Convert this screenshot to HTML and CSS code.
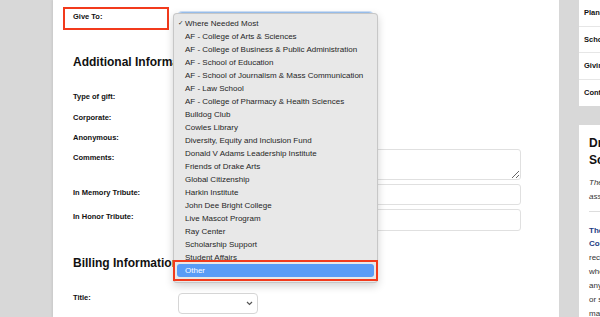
FILE: index.html
```html
<!DOCTYPE html>
<html lang="en">
  <head>
    <meta charset="UTF-8" />
    <meta name="viewport" content="width=device-width, initial-scale=1.0" />
    <title>Make a Gift</title>
    <link rel="stylesheet" href="styles.css">
  </head>
  <body>
    <div class="gutter"></div>

    <main class="gift-form">
      <div class="form-row give-row">
        <label class="form-label callout">Give To:</label>
        <div class="field">
          <div class="select-box focused"></div>

          <!-- open dropdown of the Give To select -->
          <ul class="dropdown">
            <li class="checked">Where Needed Most</li>
            <li>AF - College of Arts &amp; Sciences</li>
            <li>AF - College of Business &amp; Public Administration</li>
            <li>AF - School of Education</li>
            <li>AF - School of Journalism &amp; Mass Communication</li>
            <li>AF - Law School</li>
            <li>AF - College of Pharmacy &amp; Health Sciences</li>
            <li>Bulldog Club</li>
            <li>Cowles Library</li>
            <li>Diversity, Equity and Inclusion Fund</li>
            <li>Donald V Adams Leadership Institute</li>
            <li>Friends of Drake Arts</li>
            <li>Global Citizenship</li>
            <li>Harkin Institute</li>
            <li>John Dee Bright College</li>
            <li>Live Mascot Program</li>
            <li>Ray Center</li>
            <li>Scholarship Support</li>
            <li>Student Affairs</li>
            <li class="active">Other</li>
          </ul>
        </div>
      </div>

      <h2 class="section-title first">Additional Information</h2>

      <div class="form-row row-gift-type">
        <label class="form-label">Type of gift:</label>
        <div class="field"></div>
      </div>
      <div class="form-row row-corporate">
        <label class="form-label">Corporate:</label>
        <div class="field"></div>
      </div>
      <div class="form-row row-anonymous">
        <label class="form-label">Anonymous:</label>
        <div class="field"></div>
      </div>
      <div class="form-row row-comments">
        <label class="form-label">Comments:</label>
        <div class="field"><textarea class="text-area"></textarea></div>
      </div>
      <div class="form-row row-memory">
        <label class="form-label">In Memory Tribute:</label>
        <div class="field"><input class="text-input" type="text" /></div>
      </div>
      <div class="form-row row-honor">
        <label class="form-label">In Honor Tribute:</label>
        <div class="field"><input class="text-input" type="text" /></div>
      </div>

      <h2 class="section-title">Billing Information</h2>

      <div class="form-row row-title">
        <label class="form-label">Title:</label>
        <div class="field">
          <div class="select-box small">
            <svg width="7" height="5" viewBox="0 0 7 5">
              <path d="M1 1l2.5 2.5L6 1" fill="none" stroke="#555" stroke-width="1.2" />
            </svg>
          </div>
        </div>
      </div>
    </main>

    <aside class="sidebar">
      <nav class="side-nav">
        <a href="#">Planned Giving</a>
        <a href="#">Scholarships</a>
        <a href="#">Giving Societies</a>
        <a href="#">Contact Us</a>
      </nav>

      <div class="side-card">
        <h3>Drake Fund<br>Scholarships</h3>
        <p class="intro">The Drake Fund gives every student<br>assistance each year.</p>
        <hr />
        <p class="fund-name">The Drake Fund<br>Collective</p>
        <p class="fund-text">receives gifts from alumni<br>who support students in<br>any program, department<br>or school. These gifts<br>make it possible to<br>help students.</p>
      </div>
    </aside>
  </body>
</html>
```

FILE: styles.css
```css
* {
  margin: 0;
  padding: 0;
  box-sizing: border-box;
}

body {
  font-family: "Liberation Sans", Arial, sans-serif;
  background: #d8d8d8;
  color: #1a1a1a;
  height: 100vh;
  overflow: hidden;
  display: flex;
}

.gutter {
  width: 53px;
  flex-shrink: 0;
}

.gift-form {
  width: 506px;
  flex-shrink: 0;
  background: white;
  padding: 12px 38px 0 20px;
  box-shadow: -1px 0 2px rgba(0, 0, 0, 0.08);
}

.form-row {
  display: grid;
  grid-template-columns: 105px 343px;
  align-items: start;
}

.form-label {
  font-size: 7.5px;
  font-weight: bold;
  line-height: 10px;
  color: #111;
}

.field {
  position: relative;
}

.callout {
  position: relative;
}

.callout::after {
  content: "";
  position: absolute;
  left: -10px;
  top: -5px;
  width: 102px;
  height: 19px;
  border: 2px solid #f23a1c;
}

.give-row {
  height: 22px;
}

.select-box {
  height: 22px;
  width: 195px;
  border: 1px solid #d6d6d6;
  border-radius: 4px;
  background: white;
}

.select-box.focused {
  border-color: #9cc3f2;
  box-shadow: 0 0 0 1px #cfe1f8;
}

.select-box.small {
  width: 80px;
  height: 21px;
  display: flex;
  align-items: center;
  justify-content: flex-end;
  padding-right: 4px;
}

.dropdown {
  position: absolute;
  left: -5px;
  top: 1px;
  width: 205px;
  list-style: none;
  background: #e8e8e8;
  border: 1px solid rgba(0, 0, 0, 0.14);
  border-radius: 4px;
  padding: 2.5px 3px 4.5px;
  box-shadow: 0 3px 8px rgba(0, 0, 0, 0.18);
  z-index: 2;
}

.dropdown li {
  position: relative;
  font-size: 8px;
  line-height: 13.05px;
  height: 13.05px;
  padding-left: 8px;
  color: #262626;
  white-space: nowrap;
}

.dropdown li.checked::before {
  content: "✓";
  position: absolute;
  left: 1px;
  font-family: "DejaVu Sans", sans-serif;
  font-size: 6.5px;
}

.dropdown li.active {
  background: #5a9cf6;
  color: white;
  border-radius: 3px;
}

.dropdown li.active::after {
  content: "";
  position: absolute;
  left: -4px;
  right: -4px;
  top: -4px;
  bottom: -4px;
  border: 2px solid #f23a1c;
}

.section-title {
  font-size: 12px;
  font-weight: bold;
  line-height: 14px;
  color: #111;
  margin: 25px 0 23px;
}

.section-title.first {
  margin-top: 21px;
}

.row-gift-type {
  height: 21px;
}

.row-corporate {
  height: 20px;
}

.row-anonymous {
  height: 16px;
}

.row-comments .form-label,
.row-memory .form-label {
  padding-top: 4px;
}

.row-honor .form-label {
  padding-top: 3px;
}

.row-memory,
.row-honor {
  margin-top: 4px;
}

.text-area {
  display: block;
  width: 343px;
  height: 31px;
  border: 1px solid #e0e0e0;
  border-radius: 3px;
  font-family: inherit;
}

.text-input {
  display: block;
  width: 343px;
  height: 21px;
  border: 1px solid #e0e0e0;
  border-radius: 3px;
}

.row-honor .text-input {
  height: 22px;
}

.sidebar {
  margin-left: 20px;
  width: 210px;
  flex-shrink: 0;
}

.side-nav {
  background: white;
  display: flex;
  flex-direction: column;
}

.side-nav a {
  height: 26.5px;
  line-height: 26.5px;
  padding-left: 5px;
  font-size: 7.5px;
  font-weight: bold;
  color: #111;
  text-decoration: none;
  border-bottom: 1px solid #e6e6e6;
}

.side-nav a:last-child {
  border-bottom: none;
}

.side-card {
  background: white;
  margin-top: 19px;
  padding: 10px 10px 20px;
}

.side-card h3 {
  font-size: 12px;
  line-height: 17px;
  color: #111;
}

.side-card .intro {
  margin-top: 7px;
  font-size: 8px;
  line-height: 14px;
  font-style: italic;
  color: #333;
}

.side-card hr {
  border: none;
  border-top: 1px solid #ddd;
  margin: 7px 0 12px;
}

.side-card .fund-name {
  font-size: 8px;
  line-height: 13px;
  font-weight: bold;
  color: #1d3c84;
}

.side-card .fund-text {
  margin-top: 1px;
  font-size: 8px;
  line-height: 14px;
  color: #333;
}
```
